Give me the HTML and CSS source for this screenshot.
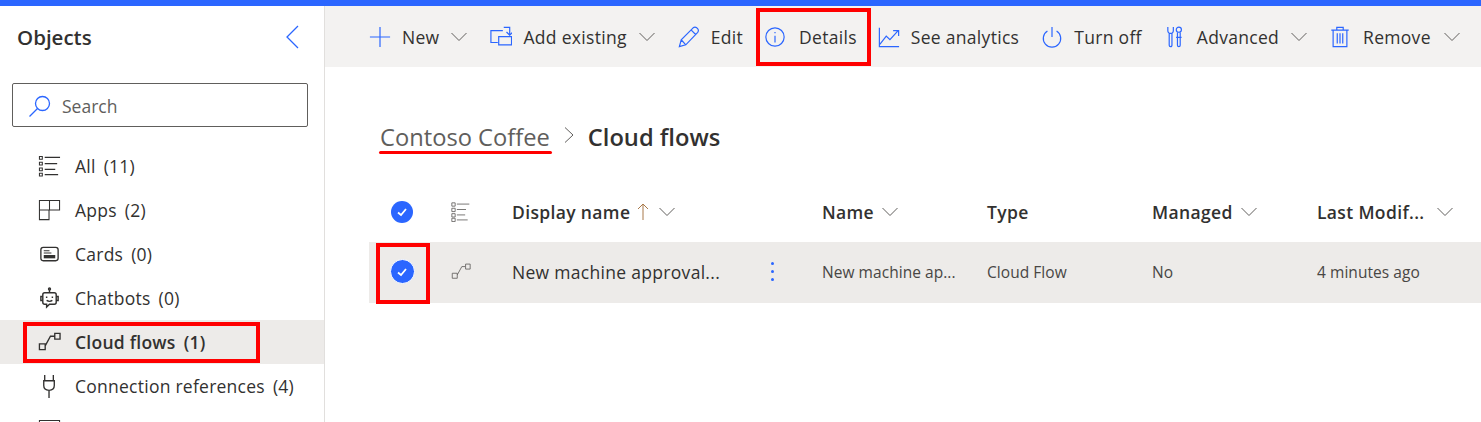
FILE: index.html
```html
<!DOCTYPE html>
<html lang="en">
<head>
<meta charset="UTF-8">
<title>Cloud flows</title>
<link rel="stylesheet" href="styles.css">
</head>
<body>
<div class="topline"></div>
<div class="app">
  <aside class="sidebar">
    <div class="side-head">
      <h2>Objects</h2>
      <svg class="collapse" width="16" height="24" viewBox="0 0 16 24"><path d="M13 1 2 12l11 11"/></svg>
    </div>
    <div class="search">
      <svg width="24" height="24" viewBox="0 0 24 24"><circle cx="14.5" cy="9.5" r="7"/><path d="M9.5 14.5 1.5 22.5"/></svg>
      <span>Search</span>
    </div>
    <ul class="nav">
      <li>
        <svg viewBox="0 0 24 24"><path d="M1.500 1.500h3v3h-3zM1.500 7.500h3v3h-3zM1.500 13.500h3v3h-3zM1.500 19h3v3h-3zM7 2.500h16M7 9h13M7 15h11M7 20.500h14"/></svg>
        <span>All</span><span>(11)</span>
      </li>
      <li>
        <svg viewBox="0 0 24 24"><path d="M1.500 1.500h21v10h-21zM12 1.500v10M1.500 11.500h10v10h-10z"/></svg>
        <span>Apps</span><span>(2)</span>
      </li>
      <li>
        <svg viewBox="0 0 24 24"><rect class="thick" x="3" y="4.500" width="18" height="14" rx="2.500"/><path d="M6 8h6M6 10.500h8"/><path class="fill" d="M6 12.500h12v3.500H6z"/></svg>
        <span>Cards</span><span>(0)</span>
      </li>
      <li>
        <svg class="bot" viewBox="0 0 24 24"><circle cx="12" cy="2" r="1"/><path d="M12 3v3M7 6h10q2 0 2 2v8q0 2-2 2h-5l-3 3v-3H7q-2 0-2-2V8q0-2 2-2zM5 10H3v4h2M19 10h2v4h-2M9 10v1.500M15 10v1.500M9 14q3 2 6 0"/></svg>
        <span>Chatbots</span><span>(0)</span>
      </li>
      <li class="active">
        <svg viewBox="0 0 24 24"><path class="thick" d="M1.500 13.500h6v6h-6zM7.500 15.500 13 5.500h4M17.500 2.500h5.500v6h-5.500z"/></svg>
        <span>Cloud flows</span><span>(1)</span>
      </li>
      <li>
        <svg viewBox="0 0 24 24"><path class="thick" d="M7 0v6M16 0v6M6 6h11v5q0 5-5.500 5T6 11zM11.500 16v8"/></svg>
        <span>Connection references</span><span>(4)</span>
      </li>
      <li>
        <svg viewBox="0 0 24 24"><path d="M1.500 1.500h21v18h-21z"/></svg>
      </li>
    </ul>
  </aside>

  <main class="content">
    <div class="toolbar">
      <div class="tool tool-new">
        <svg viewBox="0 0 24 24"><path d="M12 1v22M1 12h22"/></svg>
        <span>New</span>
        <svg class="chev" viewBox="0 0 16 16"><path d="M.5 4 8 11.500 15.500 4"/></svg>
      </div>
      <div class="tool tool-add">
        <svg viewBox="0 0 24 24"><path d="M8.500 18H1V5h13M9.500 11.500h14v9h-14zM15 1.500h6.500v8M18 6.500l3.500 3.500L25 6.500"/></svg>
        <span>Add existing</span>
        <svg class="chev" viewBox="0 0 16 16"><path d="M.5 4 8 11.500 15.500 4"/></svg>
      </div>
      <div class="tool tool-edit">
        <svg viewBox="0 0 24 24"><path d="M1.500 22.500 3.500 15 16.500 2q2-1.500 4 0l1 1q1.500 2 0 4L8.500 20.500zM3.500 15l5 5.500M14.500 4.500l5 5"/></svg>
        <span>Edit</span>
      </div>
      <div class="tool tool-details">
        <svg viewBox="0 0 24 24"><circle cx="12" cy="12" r="10"/><path d="M12 10.500V18M12 6.500v1.500"/></svg>
        <span>Details</span>
      </div>
      <div class="tool tool-analytics">
        <svg viewBox="0 0 24 24"><path d="M1.500 2v20.500H23M2 20l7-9 4 4 9-10M16.500 5H22.500v6"/></svg>
        <span>See analytics</span>
      </div>
      <div class="tool tool-off">
        <svg viewBox="0 0 24 24"><path d="M7 5.500a9.500 9.500 0 1 0 10 0M12 1v11"/></svg>
        <span>Turn off</span>
      </div>
      <div class="tool tool-adv">
        <svg viewBox="0 0 24 24"><path d="M2 1v4q0 3 3 3t3-3V1M3.500 8v13q0 1.500 1.500 1.500T6.500 21V8"/><circle cx="14" cy="4" r="2.800"/><path d="M12.500 7v14q0 1.500 1.500 1.500t1.500-1.500V7M11 12.500h6"/></svg>
        <span>Advanced</span>
        <svg class="chev" viewBox="0 0 16 16"><path d="M.5 4 8 11.500 15.500 4"/></svg>
      </div>
      <div class="tool tool-remove">
        <svg viewBox="0 0 24 24"><path d="M2.500 4.500h19M8.500 4.500v-3h7v3M4.500 4.500v18h15v-18M9 8v11M12 8v11M15 8v11"/></svg>
        <span>Remove</span>
        <svg class="chev" viewBox="0 0 16 16"><path d="M.5 4 8 11.500 15.500 4"/></svg>
      </div>
    </div>

    <div class="breadcrumb">
      <span class="crumb">Contoso Coffee</span>
      <svg width="14" height="18" viewBox="0 0 14 18"><path d="M2 1.500 10 9l-8 7.500"/></svg>
      <strong>Cloud flows</strong>
    </div>

    <div class="grid head">
      <div class="cell-check"><span class="check"><svg viewBox="0 0 12 12"><path d="M2 6.500 5 9l5-6"/></svg></span></div>
      <div class="cell-icon">
        <svg viewBox="0 0 24 24"><path d="M1 1h4v4H1zM1 7.500h4v4H1zM1 14h4v4H1zM1 19.500h4v4H1zM7 2.500h15M7 9h11M7 15.500h10M7 21.500h13"/></svg>
      </div>
      <div class="th">Display name <svg class="arrow" viewBox="0 0 12 18"><path d="M6 17V1M1 6l5-5 5 5"/></svg><svg class="chev chev-sort" viewBox="0 0 16 16"><path d="M.5 4 8 11.500 15.500 4"/></svg></div>
      <div></div>
      <div class="th">Name <svg class="chev" viewBox="0 0 16 16"><path d="M.5 4 8 11.500 15.500 4"/></svg></div>
      <div class="th">Type</div>
      <div class="th">Managed <svg class="chev" viewBox="0 0 16 16"><path d="M.5 4 8 11.500 15.500 4"/></svg></div>
      <div class="th">Last Modif... <svg class="chev chev-far" viewBox="0 0 16 16"><path d="M.5 4 8 11.500 15.500 4"/></svg></div>
    </div>
    <div class="grid row">
      <div class="cell-check"><span class="check ring"><svg viewBox="0 0 12 12"><path d="M2 6.500 5 9l5-6"/></svg></span></div>
      <div class="cell-icon">
        <svg viewBox="0 0 24 24"><path d="M1.500 13.500h6v6h-6zM7.500 15.500 13 5.500h4M17.500 2.500h5.500v6h-5.500z"/></svg>
      </div>
      <div class="row-title">New machine approval...</div>
      <div class="more"><i></i><i></i><i></i></div>
      <div>New machine ap...</div>
      <div>Cloud Flow</div>
      <div>No</div>
      <div>4 minutes ago</div>
    </div>
  </main>
</div>

<!-- red callouts drawn over the screenshot -->
<div class="mark mark-details"></div>
<div class="mark mark-check"></div>
<div class="mark mark-flows"></div>
<div class="mark-line"></div>
</body>
</html>
```

FILE: styles.css
```css
* {
  box-sizing: border-box;
}
html, body {
  height: 100%;
}
body {
  margin: 0;
  overflow: hidden;
  position: relative;
  font-family: "Open Sans", "Noto Sans", sans-serif;
  color: #323130;
  background-color: #fff;
}
svg {
  fill: none;
  stroke: currentColor;
  stroke-width: 1;
  flex: none;
}
.topline {
  height: 6px;
  background-color: #2b66ff;
}
.app {
  display: flex;
  height: 416px;
  overflow: hidden;
}

/* Sidebar */
.sidebar {
  width: 325px;
  flex: none;
  overflow: hidden;
  border-right: 1px solid #e1dfdd;
}
.side-head {
  display: flex;
  align-items: center;
  justify-content: space-between;
  padding: 0 23px 0 17px;
  height: 62px;
}
.side-head h2 {
  margin: 0;
  font-size: 20.5px;
  font-weight: 600;
}
.collapse {
  color: #2b66ff;
  stroke-width: 1.3;
}
.search {
  display: flex;
  align-items: center;
  gap: 10px;
  height: 44px;
  margin: 15px 16px 0 12px;
  padding: 1px 15px 0;
  border: 1px solid #605e5c;
  border-radius: 2px;
  color: #605e5c;
  font-size: 17.5px;
}
.search svg {
  color: #2b66ff;
  stroke-width: 1.3;
}
.nav {
  list-style: none;
  margin: 17px 0 0;
  padding: 0;
}
.nav li {
  display: flex;
  align-items: center;
  height: 44px;
  padding-left: 38px;
  font-size: 17.5px;
  letter-spacing: 0.25px;
}
.nav li svg {
  width: 23px;
  height: 23px;
  margin-right: 14px;
  stroke-width: 1.1;
}
.nav li span + span {
  margin-left: 8px;
}
.nav .fill {
  fill: #323130;
  stroke: none;
}
.nav .thick {
  stroke-width: 1.4;
}
.nav li .bot {
  stroke-width: 1.5;
}
.nav .active {
  background-color: #edebe9;
  font-weight: 600;
}

/* Toolbar */
.content {
  flex: 1;
  min-width: 0;
}
.toolbar {
  display: flex;
  align-items: center;
  height: 61px;
  padding-left: 44px;
  background-color: #f3f2f1;
  font-size: 17.5px;
  letter-spacing: 0.3px;
}
.tool {
  display: flex;
  align-items: center;
  flex: none;
  gap: 11px;
  white-space: nowrap;
}
.tool > svg:first-child {
  width: 22px;
  height: 22px;
  color: #2b66ff;
  stroke-width: 1.3;
}
.tool .chev {
  margin-left: 1px;
}
.chev {
  width: 16px;
  height: 16px;
  color: #605e5c;
}
.tool-add { margin-left: 23px; }
.tool-edit { margin-left: 23px; }
.tool-details { margin-left: 21px; gap: 13px; }
.tool-analytics { margin-left: 21px; }
.tool-off { margin-left: 22px; }
.tool-adv { margin-left: 24px; gap: 9px; }
.tool-adv .chev { margin-left: 3px; }
.tool-remove { margin-left: 22px; gap: 12px; }

/* Breadcrumb */
.breadcrumb {
  display: flex;
  align-items: center;
  height: 40px;
  margin: 50px 0 0 55px;
  font-size: 23.7px;
}
.crumb {
  color: #605e5c;
}
.breadcrumb svg {
  margin: 0 11px 4px 13px;
  color: #605e5c;
}
.breadcrumb strong {
  font-weight: 600;
}

/* Table */
.grid {
  display: grid;
  grid-template-columns: 66px 77px 258px 52px 165px 165px 165px 1fr;
  align-items: center;
  margin-left: 44px;
}
.head {
  height: 60px;
  margin-top: 25px;
  font-size: 17.5px;
}
.row {
  height: 61px;
  padding-bottom: 2px;
  background-color: #edebe9;
  font-size: 15.5px;
  letter-spacing: 0.05px;
  color: #484644;
}
.cell-check {
  display: flex;
  justify-content: center;
}
.cell-icon {
  padding-left: 16px;
}
.cell-icon svg {
  display: block;
  width: 20px;
  height: 20px;
  color: #605e5c;
}
.check {
  display: flex;
  align-items: center;
  justify-content: center;
  width: 22px;
  height: 22px;
  border-radius: 50%;
  background-color: #2b66ff;
  color: #fff;
}
.check svg {
  width: 12px;
  height: 12px;
  stroke-width: 1.8;
}
.ring {
  width: 25px;
  height: 25px;
  border: 1.500px solid #fff;
}
.th {
  display: flex;
  align-items: center;
  gap: 5px;
  font-weight: 600;
  letter-spacing: 0.35px;
  white-space: nowrap;
}
.arrow {
  width: 12px;
  height: 18px;
  margin-left: 2px;
  color: #a8794a;
}
.th .chev {
  margin-left: 3px;
}
.th .chev-sort {
  margin-left: 5px;
}
.th .chev-far {
  margin-left: 7px;
}
.row-title {
  font-size: 17.5px;
  letter-spacing: 0.3px;
  color: #323130;
  white-space: nowrap;
}
.more {
  display: flex;
  flex-direction: column;
  align-items: flex-start;
  gap: 5px;
  padding-left: 1px;
}
.more i {
  width: 3px;
  height: 3px;
  border-radius: 50%;
  background-color: #2b66ff;
}

/* Red callouts */
.mark {
  position: absolute;
  border: 4px solid #f00;
}
.mark-details {
  left: 756px;
  top: 8px;
  width: 115px;
  height: 58px;
}
.mark-check {
  left: 376px;
  top: 243px;
  width: 54px;
  height: 61px;
}
.mark-flows {
  left: 23px;
  top: 322px;
  width: 237px;
  height: 41px;
}
.mark-line {
  position: absolute;
  left: 379px;
  top: 151px;
  width: 173px;
  height: 3px;
  border-radius: 2px;
  background-color: #f00;
}
```
